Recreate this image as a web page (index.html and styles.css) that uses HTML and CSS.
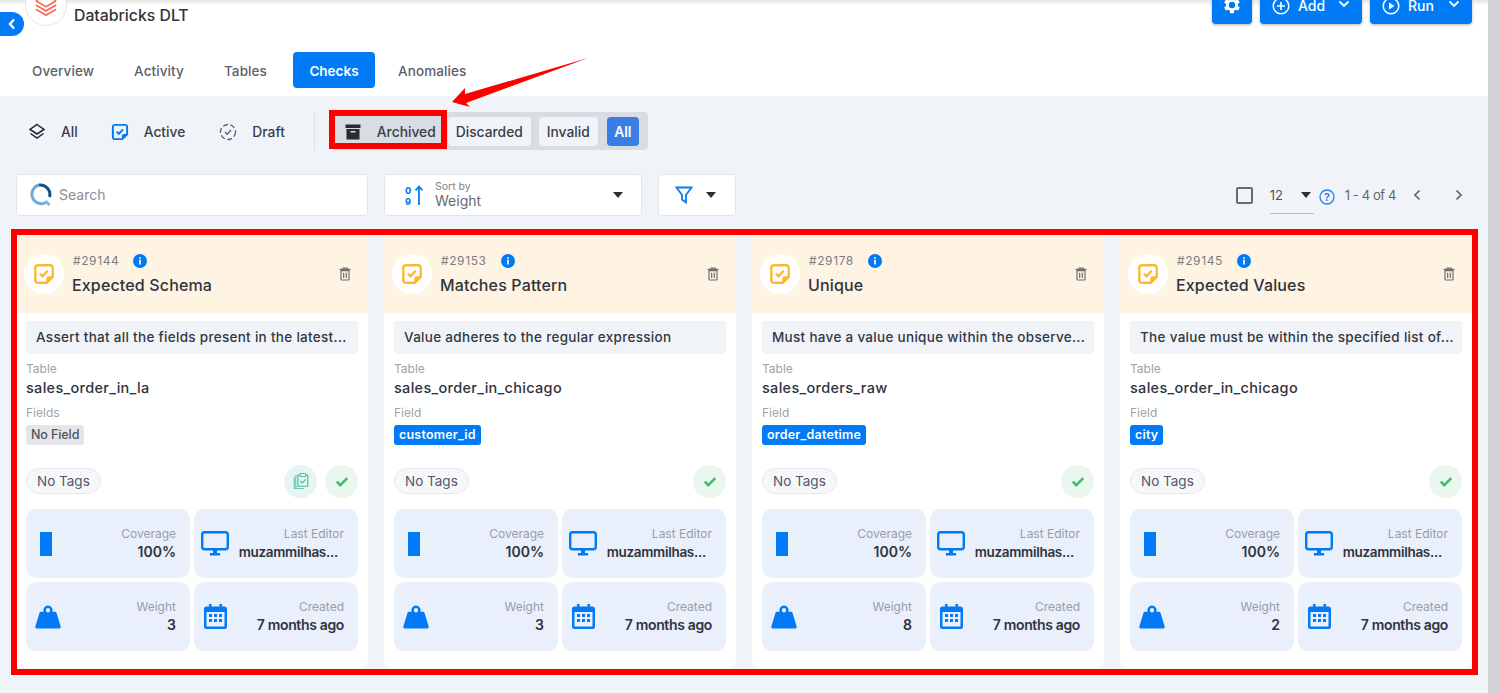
FILE: index.html
```html
<!DOCTYPE html>
<html>
<head>
  <meta charset="utf-8">
  <title>Databricks DLT - Checks</title>
  <link rel="stylesheet" href="styles.css">
</head>
<body>

<svg class="defs" width="0" height="0">
  <symbol id="i-note" viewBox="0 0 24 24"><path d="M5 2.500h14a2.500 2.500 0 0 1 2.500 2.500v10l-6.500 6.500H5a2.500 2.500 0 0 1-2.500-2.500V5A2.500 2.500 0 0 1 5 2.500z" fill="none" stroke="currentColor" stroke-width="2.600"/><path d="M14.500 22v-5a2.500 2.500 0 0 1 2.500-2.500h5z" fill="currentColor"/><path d="M7.500 11.500l3 3 5.500-6" fill="none" stroke="currentColor" stroke-width="2.600"/></symbol>
  <symbol id="i-info" viewBox="0 0 24 24"><circle cx="12" cy="12" r="12" fill="currentColor"/><rect x="10.600" y="10" width="2.800" height="8" fill="#fff"/><rect x="10.600" y="5.600" width="2.800" height="2.800" fill="#fff"/></symbol>
  <symbol id="i-trash" viewBox="0 0 24 24"><path d="M6 7h12v13a1 1 0 0 1-1 1H7a1 1 0 0 1-1-1z M4 5h16 M9 5V3h6v2 M10 10v8 M14 10v8" fill="none" stroke="currentColor" stroke-width="1.800"/></symbol>
  <symbol id="i-check" viewBox="0 0 24 24"><path d="M3 13l6 6L21 7" fill="none" stroke="currentColor" stroke-width="4.600"/></symbol>
  <symbol id="i-clip" viewBox="0 0 24 24"><path d="M7 5H5v15h2 M3 7v15h13" fill="none" stroke="currentColor" stroke-width="1.600" opacity=".8"/><path d="M10 4h-2v15h13V4h-2" fill="none" stroke="currentColor" stroke-width="1.600"/><rect x="10.500" y="2" width="8" height="4" rx="1" fill="none" stroke="currentColor" stroke-width="1.600"/><path d="M11 12l2.500 2.500L18 10" fill="none" stroke="currentColor" stroke-width="1.600"/></symbol>
  <symbol id="i-monitor" viewBox="0 0 28 25"><rect x="1.200" y="1.200" width="25.600" height="17" rx="2.400" fill="none" stroke="currentColor" stroke-width="2.400"/><path d="M12 19h4v3h3v2.400H9V22h3z" fill="currentColor"/></symbol>
  <symbol id="i-weight" viewBox="0 0 26 24"><path d="M13 0.500a4.600 4.600 0 0 1 4.300 6.200H20a1.600 1.600 0 0 1 1.500 1.100l4.200 14A1.500 1.500 0 0 1 24.300 23.500H1.700A1.500 1.500 0 0 1 .3 21.800l4.200-14A1.600 1.600 0 0 1 6 6.700h2.700A4.600 4.600 0 0 1 13 .5zm0 2.500a2.200 2.200 0 1 0 0 4.400 2.200 2.200 0 0 0 0-4.400z" fill="currentColor" fill-rule="evenodd"/></symbol>
  <symbol id="i-cal" viewBox="0 0 23 25"><path d="M5 0h2.500v2.500h8V0H18v2.500h2.500A2.500 2.500 0 0 1 23 5v17.500a2.500 2.500 0 0 1-2.500 2.500h-18A2.500 2.500 0 0 1 0 22.500V5a2.500 2.500 0 0 1 2.500-2.500H5z" fill="currentColor"/><rect x="2.500" y="8" width="18" height="14.500" fill="#e9effb"/><g fill="currentColor"><rect x="5" y="10" width="3" height="3"/><rect x="10" y="10" width="3" height="3"/><rect x="15" y="10" width="3" height="3"/><rect x="5" y="15" width="3" height="3"/><rect x="10" y="15" width="3" height="3"/><rect x="15" y="15" width="3" height="3"/></g></symbol>
  <symbol id="i-caret" viewBox="0 0 10 6"><path d="M0 0h10L5 6z" fill="currentColor"/></symbol>
</svg>

<div class="page">
  <main class="main">
    <header class="head">
      <div class="head-top">
        <div class="source">
          <span class="logo">
            <svg width="22" height="24" viewBox="0 0 26 28"><path d="M1 9l12 7 12-7 M1 14l12 7 12-7 M1 19l12 7 12-7 M1 9l12-7 12 7" fill="none" stroke="#f8705f" stroke-width="2.200"/></svg>
          </span>
          <span class="source-name">Databricks DLT</span>
        </div>
        <div class="head-btns">
          <button class="btn btn-icon">
            <svg width="22" height="22" viewBox="1 0 24 24"><path d="M19.400 13a7.500 7.500 0 0 0 0-2l2.100-1.600-2-3.500-2.500 1a7.500 7.500 0 0 0-1.700-1L15 3h-4l-.4 2.900a7.500 7.500 0 0 0-1.700 1l-2.500-1-2 3.500L6.500 11a7.500 7.500 0 0 0 0 2l-2.100 1.600 2 3.500 2.500-1a7.500 7.500 0 0 0 1.700 1L11 21h4l.4-2.900a7.500 7.500 0 0 0 1.700-1l2.500 1 2-3.500zM13 15.500a3.500 3.500 0 1 1 0-7 3.500 3.500 0 0 1 0 7z" fill="#fff" fill-rule="evenodd"/></svg>
          </button>
          <button class="btn">
            <svg width="18" height="18" viewBox="0 0 18 18"><circle cx="9" cy="9" r="7.800" fill="none" stroke="#fff" stroke-width="1.500"/><path d="M9 5v8M5 9h8" stroke="#fff" stroke-width="1.600"/></svg>
            <span class="btn-label">Add</span>
            <svg class="btn-chev" width="12" height="8" viewBox="0 0 12 8"><path d="M1.500 1.500L6 6l4.500-4.500" fill="none" stroke="#fff" stroke-width="1.800"/></svg>
          </button>
          <button class="btn">
            <svg width="18" height="18" viewBox="0 0 18 18"><circle cx="9" cy="9" r="7.800" fill="none" stroke="#fff" stroke-width="1.500"/><path d="M7 5.500L12.500 9 7 12.500z" fill="#fff"/></svg>
            <span class="btn-label">Run</span>
            <svg class="btn-chev" width="12" height="8" viewBox="0 0 12 8"><path d="M1.500 1.500L6 6l4.500-4.500" fill="none" stroke="#fff" stroke-width="1.800"/></svg>
          </button>
        </div>
      </div>
      <nav class="tabs">
        <a class="tab">Overview</a>
        <a class="tab">Activity</a>
        <a class="tab">Tables</a>
        <a class="tab tab-on">Checks</a>
        <a class="tab">Anomalies</a>
      </nav>
    </header>

    <section class="content">
      <div class="status-row">
        <a class="status status-all">
          <svg width="18" height="18" viewBox="0 0 18 18"><path d="M9 1.500L16 6.500 9 11 2 6.500z M2.500 10.500L9 15l6.500-4.500" fill="none" stroke="#1d2433" stroke-width="1.500"/></svg>
          <span>All</span>
        </a>
        <a class="status status-active">
          <svg class="c-blue" width="18" height="18"><use href="#i-note"/></svg>
          <span>Active</span>
        </a>
        <a class="status status-draft">
          <svg width="18" height="18" viewBox="0 0 18 18"><circle cx="9" cy="9" r="7.500" fill="none" stroke="#5a6072" stroke-width="1.300" stroke-dasharray="5 2.500"/><path d="M6 9l2.200 2.200L12 7" fill="none" stroke="#5a6072" stroke-width="1.300"/></svg>
          <span>Draft</span>
        </a>
        <span class="divider"></span>
        <div class="seg">
          <a class="seg-item seg-archived">
            <svg width="16" height="16" viewBox="0 0 16 16"><rect x="0.500" y="0.500" width="15" height="3.500" fill="#2b2b2b"/><path d="M1.500 5h13v10.500h-13z" fill="#2b2b2b"/><rect x="5.500" y="7" width="5" height="1.500" fill="#d8dce2"/></svg>
            <span>Archived</span>
          </a>
          <a class="seg-item">Discarded</a>
          <a class="seg-item">Invalid</a>
          <a class="seg-item seg-on">All</a>
        </div>
      </div>

      <div class="tool-row">
        <div class="box search">
          <svg width="24" height="24" viewBox="0 0 24 24"><path d="M17 19.500A9.500 9.500 0 1 1 10 2" fill="none" stroke="#6fabdd" stroke-width="3"/><path d="M10 2A9.500 9.500 0 0 1 20.500 14" fill="none" stroke="#14507f" stroke-width="3"/><path d="M16.500 18l4 4" stroke="#7fb4e0" stroke-width="3"/></svg>
          <span>Search</span>
        </div>
        <div class="box sort">
          <svg width="20" height="26" viewBox="0 -2 20 26"><text class="sort-num" x="0" y="9.500">0</text><text class="sort-num" x="0" y="20.500">9</text><path d="M14 21V3 M10.500 6.500L14 2.500l3.500 4" fill="none" stroke="#0a7cf0" stroke-width="1.800"/></svg>
          <div class="sort-text">
            <span class="sort-by">Sort by</span>
            <span class="sort-val">Weight</span>
          </div>
          <svg class="caret" width="10" height="6"><use href="#i-caret"/></svg>
        </div>
        <div class="box filter">
          <svg width="18" height="18" viewBox="0 0 18 18"><path d="M1.500 1.500h15L11 9v7.500L7 13.500V9z" fill="none" stroke="#0a7cf0" stroke-width="1.800"/></svg>
          <svg class="caret" width="10" height="6"><use href="#i-caret"/></svg>
        </div>
        <div class="pager">
          <span class="pager-check"></span>
          <div class="per-page">
            <span>12</span>
            <svg class="caret" width="10" height="6"><use href="#i-caret"/></svg>
          </div>
          <svg class="pager-help" width="16" height="16" viewBox="0 0 16 16"><circle cx="8" cy="8" r="7" fill="none" stroke="#2b7de9" stroke-width="1.300"/><text class="help-mark" x="8" y="12" text-anchor="middle">?</text></svg>
          <span class="pager-count">1 - 4 of 4</span>
          <svg class="pager-arrow" width="10" height="12" viewBox="0 0 10 12"><path d="M7.500 1.500L3 6l4.500 4.500" fill="none" stroke="#5f6672" stroke-width="1.700"/></svg>
          <svg class="pager-arrow" width="10" height="12" viewBox="0 0 10 12"><path d="M2.500 1.500L7 6l-4.500 4.500" fill="none" stroke="#5f6672" stroke-width="1.700"/></svg>
        </div>
      </div>

      <div class="cards">
        <article class="card">
          <div class="card-head">
            <span class="card-badge"><svg class="c-amber" width="22" height="22"><use href="#i-note"/></svg></span>
            <div class="card-title">
              <div class="card-id"><span>#29144</span><svg class="c-blue" width="14" height="14"><use href="#i-info"/></svg></div>
              <div class="card-name">Expected Schema</div>
            </div>
            <svg class="c-trash" width="16" height="16"><use href="#i-trash"/></svg>
          </div>
          <div class="card-body">
            <div class="card-desc">Assert that all the fields present in the latest...</div>
            <div class="lbl">Table</div>
            <div class="val">sales_order_in_la</div>
            <div class="lbl lbl-field">Fields</div>
            <span class="chip chip-none">No Field</span>
            <div class="tag-row">
              <span class="no-tags">No Tags</span>
              <span class="round round-teal"><svg width="18" height="18"><use href="#i-clip"/></svg></span>
              <span class="round round-green"><svg width="14" height="14"><use href="#i-check"/></svg></span>
            </div>
            <div class="stats">
              <div class="stat"><span class="cov-bar"></span><div class="stat-text"><span class="stat-lbl">Coverage</span><span class="stat-val">100%</span></div></div>
              <div class="stat"><svg class="c-blue" width="28" height="25"><use href="#i-monitor"/></svg><div class="stat-text"><span class="stat-lbl">Last Editor</span><span class="stat-val stat-cut">muzammilhas...</span></div></div>
              <div class="stat"><svg class="c-blue stat-kg" width="26" height="24"><use href="#i-weight"/></svg><div class="stat-text"><span class="stat-lbl">Weight</span><span class="stat-val">3</span></div></div>
              <div class="stat"><svg class="c-blue stat-cal" width="23" height="25"><use href="#i-cal"/></svg><div class="stat-text"><span class="stat-lbl">Created</span><span class="stat-val stat-ago">7 months ago</span></div></div>
            </div>
          </div>
        </article>

        <article class="card">
          <div class="card-head">
            <span class="card-badge"><svg class="c-amber" width="22" height="22"><use href="#i-note"/></svg></span>
            <div class="card-title">
              <div class="card-id"><span>#29153</span><svg class="c-blue" width="14" height="14"><use href="#i-info"/></svg></div>
              <div class="card-name">Matches Pattern</div>
            </div>
            <svg class="c-trash" width="16" height="16"><use href="#i-trash"/></svg>
          </div>
          <div class="card-body">
            <div class="card-desc">Value adheres to the regular expression</div>
            <div class="lbl">Table</div>
            <div class="val">sales_order_in_chicago</div>
            <div class="lbl lbl-field">Field</div>
            <span class="chip">customer_id</span>
            <div class="tag-row">
              <span class="no-tags">No Tags</span>
              <span class="round round-green"><svg width="14" height="14"><use href="#i-check"/></svg></span>
            </div>
            <div class="stats">
              <div class="stat"><span class="cov-bar"></span><div class="stat-text"><span class="stat-lbl">Coverage</span><span class="stat-val">100%</span></div></div>
              <div class="stat"><svg class="c-blue" width="28" height="25"><use href="#i-monitor"/></svg><div class="stat-text"><span class="stat-lbl">Last Editor</span><span class="stat-val stat-cut">muzammilhas...</span></div></div>
              <div class="stat"><svg class="c-blue stat-kg" width="26" height="24"><use href="#i-weight"/></svg><div class="stat-text"><span class="stat-lbl">Weight</span><span class="stat-val">3</span></div></div>
              <div class="stat"><svg class="c-blue stat-cal" width="23" height="25"><use href="#i-cal"/></svg><div class="stat-text"><span class="stat-lbl">Created</span><span class="stat-val stat-ago">7 months ago</span></div></div>
            </div>
          </div>
        </article>

        <article class="card">
          <div class="card-head">
            <span class="card-badge"><svg class="c-amber" width="22" height="22"><use href="#i-note"/></svg></span>
            <div class="card-title">
              <div class="card-id"><span>#29178</span><svg class="c-blue" width="14" height="14"><use href="#i-info"/></svg></div>
              <div class="card-name">Unique</div>
            </div>
            <svg class="c-trash" width="16" height="16"><use href="#i-trash"/></svg>
          </div>
          <div class="card-body">
            <div class="card-desc">Must have a value unique within the observe...</div>
            <div class="lbl">Table</div>
            <div class="val">sales_orders_raw</div>
            <div class="lbl lbl-field">Field</div>
            <span class="chip">order_datetime</span>
            <div class="tag-row">
              <span class="no-tags">No Tags</span>
              <span class="round round-green"><svg width="14" height="14"><use href="#i-check"/></svg></span>
            </div>
            <div class="stats">
              <div class="stat"><span class="cov-bar"></span><div class="stat-text"><span class="stat-lbl">Coverage</span><span class="stat-val">100%</span></div></div>
              <div class="stat"><svg class="c-blue" width="28" height="25"><use href="#i-monitor"/></svg><div class="stat-text"><span class="stat-lbl">Last Editor</span><span class="stat-val stat-cut">muzammilhas...</span></div></div>
              <div class="stat"><svg class="c-blue stat-kg" width="26" height="24"><use href="#i-weight"/></svg><div class="stat-text"><span class="stat-lbl">Weight</span><span class="stat-val">8</span></div></div>
              <div class="stat"><svg class="c-blue stat-cal" width="23" height="25"><use href="#i-cal"/></svg><div class="stat-text"><span class="stat-lbl">Created</span><span class="stat-val stat-ago">7 months ago</span></div></div>
            </div>
          </div>
        </article>

        <article class="card">
          <div class="card-head">
            <span class="card-badge"><svg class="c-amber" width="22" height="22"><use href="#i-note"/></svg></span>
            <div class="card-title">
              <div class="card-id"><span>#29145</span><svg class="c-blue" width="14" height="14"><use href="#i-info"/></svg></div>
              <div class="card-name">Expected Values</div>
            </div>
            <svg class="c-trash" width="16" height="16"><use href="#i-trash"/></svg>
          </div>
          <div class="card-body">
            <div class="card-desc">The value must be within the specified list of...</div>
            <div class="lbl">Table</div>
            <div class="val">sales_order_in_chicago</div>
            <div class="lbl lbl-field">Field</div>
            <span class="chip">city</span>
            <div class="tag-row">
              <span class="no-tags">No Tags</span>
              <span class="round round-green"><svg width="14" height="14"><use href="#i-check"/></svg></span>
            </div>
            <div class="stats">
              <div class="stat"><span class="cov-bar"></span><div class="stat-text"><span class="stat-lbl">Coverage</span><span class="stat-val">100%</span></div></div>
              <div class="stat"><svg class="c-blue" width="28" height="25"><use href="#i-monitor"/></svg><div class="stat-text"><span class="stat-lbl">Last Editor</span><span class="stat-val stat-cut">muzammilhas...</span></div></div>
              <div class="stat"><svg class="c-blue stat-kg" width="26" height="24"><use href="#i-weight"/></svg><div class="stat-text"><span class="stat-lbl">Weight</span><span class="stat-val">2</span></div></div>
              <div class="stat"><svg class="c-blue stat-cal" width="23" height="25"><use href="#i-cal"/></svg><div class="stat-text"><span class="stat-lbl">Created</span><span class="stat-val stat-ago">7 months ago</span></div></div>
            </div>
          </div>
        </article>
      </div>
    </section>

    <!-- overlays: sidebar toggle and the red annotations drawn on the screenshot -->
    <button class="side-toggle"><svg width="8" height="12" viewBox="0 0 8 12"><path d="M6 1.500L2 6l4 4.500" fill="none" stroke="#fff" stroke-width="2.400"/></svg></button>
    <span class="mark mark-archived"></span>
    <span class="mark mark-cards"></span>
    <svg class="mark-arrow" width="140" height="54" viewBox="0 0 140 54"><path d="M137 1L14 37l0-6L1 45l18 5-4-4z" fill="#f00"/></svg>
  </main>
  <div class="scrollbar"></div>
</div>

</body>
</html>
```

FILE: styles.css
```css
* {box-sizing:border-box;}
html, body {margin:0; height:100%; overflow:hidden;}
body {font-family:"Inter","Noto Sans",sans-serif; color:#2b2f38;}
a {text-decoration:none; color:inherit;}
button {font-family:inherit; border:0; cursor:pointer;}
svg {display:block; flex:none;}
.defs {position:absolute;}

.c-blue {color:#007bf5;}
.c-amber {color:#fdb833;}
.c-trash {color:#6d6d6d;}

.page {display:flex; height:693px; overflow:hidden;}
.main {position:relative; width:1488px; height:693px; overflow:hidden; background:#f0f4f8;}
.scrollbar {width:12px; background:#d1d4d9;}

/* header */
.head {height:96px; background:#fff; display:flex; flex-direction:column; box-shadow:inset 0 6px 5px -5px #d5d5d5;}
.head-top {display:flex; justify-content:space-between; height:52px; padding:0 16px 0 25px;}
.source {display:flex; align-items:flex-start; gap:7px; margin-top:-16px;}
.logo {width:42px; height:42px; border-radius:50%; border:1px solid #e6e6e6; background:#fff; display:flex; align-items:center; justify-content:center;}
.source-name {font-size:15.8px; line-height:20px; font-weight:500; margin-top:22px; color:#30343c;}
.head-btns {display:flex; gap:8px; height:24px;}
.btn {display:flex; align-items:center; height:24px; width:102px; padding:0 12px 12px; gap:8px; background:#007bf5; color:#fff; border-radius:0 0 4px 4px; font-size:14px; font-weight:500; box-shadow:0 1px 3px rgba(0,0,0,.3); overflow:hidden;}
.btn-icon {width:40px; justify-content:center; padding:0 0 14px;}
.btn-label {flex:1; text-align:left; line-height:12px;}
.btn .btn-chev {margin-top:-4px;}

.tabs {display:flex; padding-left:12px; height:36px;}
.tab {display:flex; align-items:center; padding:1px 20px 0; font-size:13.5px; font-weight:500; letter-spacing:.1px; color:#5d6068; border-radius:4px;}
.tab-on {background:#007bf5; color:#fff; font-weight:600; letter-spacing:0; width:82px; justify-content:center; padding:1px 0 0; margin:0 3px 0 6px;}

/* filters */
.content {padding:16px 16px 0;}
.status-row {display:flex; align-items:center; height:38px; padding-left:12px;}
.status {display:flex; align-items:center; gap:15px; font-size:13.8px; font-weight:500; color:#3a3e48; padding-top:2px;}
.status-active {margin-left:33px;}
.status-draft {margin-left:34px;}
.divider {width:1px; height:38px; background:#dcdfe4; margin:0 17px 0 29px;}
.seg {display:flex; align-items:center; gap:8px; height:38px; padding:0 9px 0 0; background:#d8dce3; border-radius:4px;}
.seg-item {display:flex; align-items:center; height:29px; padding:2px 8px 0; background:#f0f4f8; border-radius:4px; font-size:13.8px; font-weight:500; color:#3a3e48;}
.seg-archived {background:none; gap:16px; padding:2px 4px 0 13px;}
.seg-on {background:#3a7de4; color:#fff; font-weight:600; width:32px; justify-content:center; padding:2px 0 0; margin-left:1px;}

.tool-row {display:flex; align-items:center; gap:16px; margin-top:24px; height:42px;}
.box {display:flex; align-items:center; height:42px; background:#fff; border:1px solid #e2e6ea; border-radius:4px;}
.search {width:352px; padding-left:12px; padding-bottom:1px; gap:6px; font-size:14px; color:#8b8f96;}
.sort {width:258px; padding:0 18px 0 20px; gap:10px; color:#666;}
.sort-num {font-size:9px; font-weight:800; fill:#0a7cf0;}
.sort-text {display:flex; flex-direction:column; flex:1; line-height:1;}
.sort-by {font-size:10.5px; color:#80848c; margin-bottom:1px;}
.sort-val {font-size:14px; color:#666a72;}
.caret {color:#2e2e2e;}
.filter {width:78px; padding-left:16px; gap:13px;}
.pager {display:flex; align-items:center; margin-left:auto; padding-right:8px;}
.pager-check {width:17px; height:17px; border:2px solid #6b6b6b; border-radius:2px;}
.per-page {display:flex; align-items:center; justify-content:space-between; width:44px; height:38px; margin-left:17px; padding-right:2px; border-bottom:1px solid #b8bcc2; font-size:13px; color:#555;}
.per-page .caret {margin-left:auto; margin-right:1px;}
.pager-help {margin-left:5px; margin-top:4px;}
.help-mark {font-size:11px; font-weight:600; fill:#2b7de9;}
.pager-count {margin-left:10px; font-size:13px; color:#666; letter-spacing:-.4px;}
.pager-arrow {margin-left:16px;}
.pager-arrow:last-child {margin-left:32px;}

/* cards */
.cards {display:grid; grid-template-columns:repeat(4,352px); gap:16px; margin-top:19px;}
.card {height:433px; background:#fff; border-radius:8px; overflow:hidden;}
.card-head {display:flex; align-items:center; height:78px; padding:0 15px 0 8px; background:#fff4e3;}
.card-badge {display:flex; align-items:center; justify-content:center; width:40px; height:40px; border-radius:50%; background:#fff;}
.card-title {flex:1; margin-left:8px;}
.card-id {display:flex; align-items:center; gap:14px; font-size:12px; color:#7c7c7c; letter-spacing:.6px; padding-left:1px;}
.card-name {font-size:16px; font-weight:500; letter-spacing:.15px; color:#2f333b; margin-top:7px;}
.card-body {padding:8px 10px;}
.card-desc {height:33px; line-height:33px; padding:0 10px; background:#f0f4f8; border-radius:4px; font-size:13.5px; font-weight:500; letter-spacing:.3px; color:#33373f; white-space:nowrap; overflow:hidden;}
.lbl {font-size:12px; color:#a0a3a8; margin-top:7px; line-height:16px;}
.lbl-field {margin-top:8px;}
.val {font-size:14.5px; font-weight:500; letter-spacing:.3px; color:#2f333b; margin-top:2px; line-height:18px;}
.chip {display:inline-block; height:20px; line-height:20px; padding:0 5px; margin-top:4px; background:#007bf5; color:#fff; border-radius:3px; font-size:12.5px; font-weight:600; letter-spacing:.2px;}
.chip-none {background:#e4e5e7; color:#4e5560; font-weight:500; letter-spacing:-.1px;}

.tag-row {display:flex; align-items:center; gap:8px; height:34px; margin-top:19px;}
.no-tags {display:flex; align-items:center; height:26px; padding:0 10px; margin-right:auto; background:#f5f7fa; border:1px solid #e4e9f0; border-radius:13px; font-size:13.5px; color:#55585f;}
.round {display:flex; align-items:center; justify-content:center; width:33px; height:33px; border-radius:50%;}
.round-teal {background:#e6f5f1; color:#4dbba7;}
.round-green {background:#eaf7ee; color:#3fc06e;}

.stats {display:grid; grid-template-columns:164px 164px; grid-auto-rows:69px; gap:4px; margin-top:11px;}
.stat {display:flex; align-items:center; justify-content:space-between; padding:0 14px 0 7px; background:#e9effb; border-radius:10px;}
.stat .stat-cal {margin-left:3px;}
.stat .stat-kg {margin-left:2px;}
.stat-text {display:flex; flex-direction:column; align-items:flex-end; margin-left:auto;}
.stat-lbl {font-size:12px; color:#9a9da6; line-height:16px;}
.stat-val {font-size:14px; font-weight:600; color:#2f333b; line-height:20px;}
.stat-cut {margin-right:6px; font-size:13.5px; letter-spacing:-.3px;}
.stat-ago {letter-spacing:-.35px;}
.cov-bar {width:12px; height:24px; margin-left:7px; background:#007bf5;}

/* things lying over the page */
.side-toggle {position:absolute; left:0; top:12px; width:24px; height:24px; padding:0 0 0 8px; background:#007bf5; border-radius:0 12px 12px 0;}
.mark {position:absolute; border-style:solid; border-color:#f00; pointer-events:none;}
.mark-archived {left:329px; top:110px; width:118px; height:39px; border-width:6px;}
.mark-cards {left:11px; top:229px; width:1467px; height:446px; border-width:6px;}
.mark-arrow {position:absolute; left:451px; top:57px;}
```
